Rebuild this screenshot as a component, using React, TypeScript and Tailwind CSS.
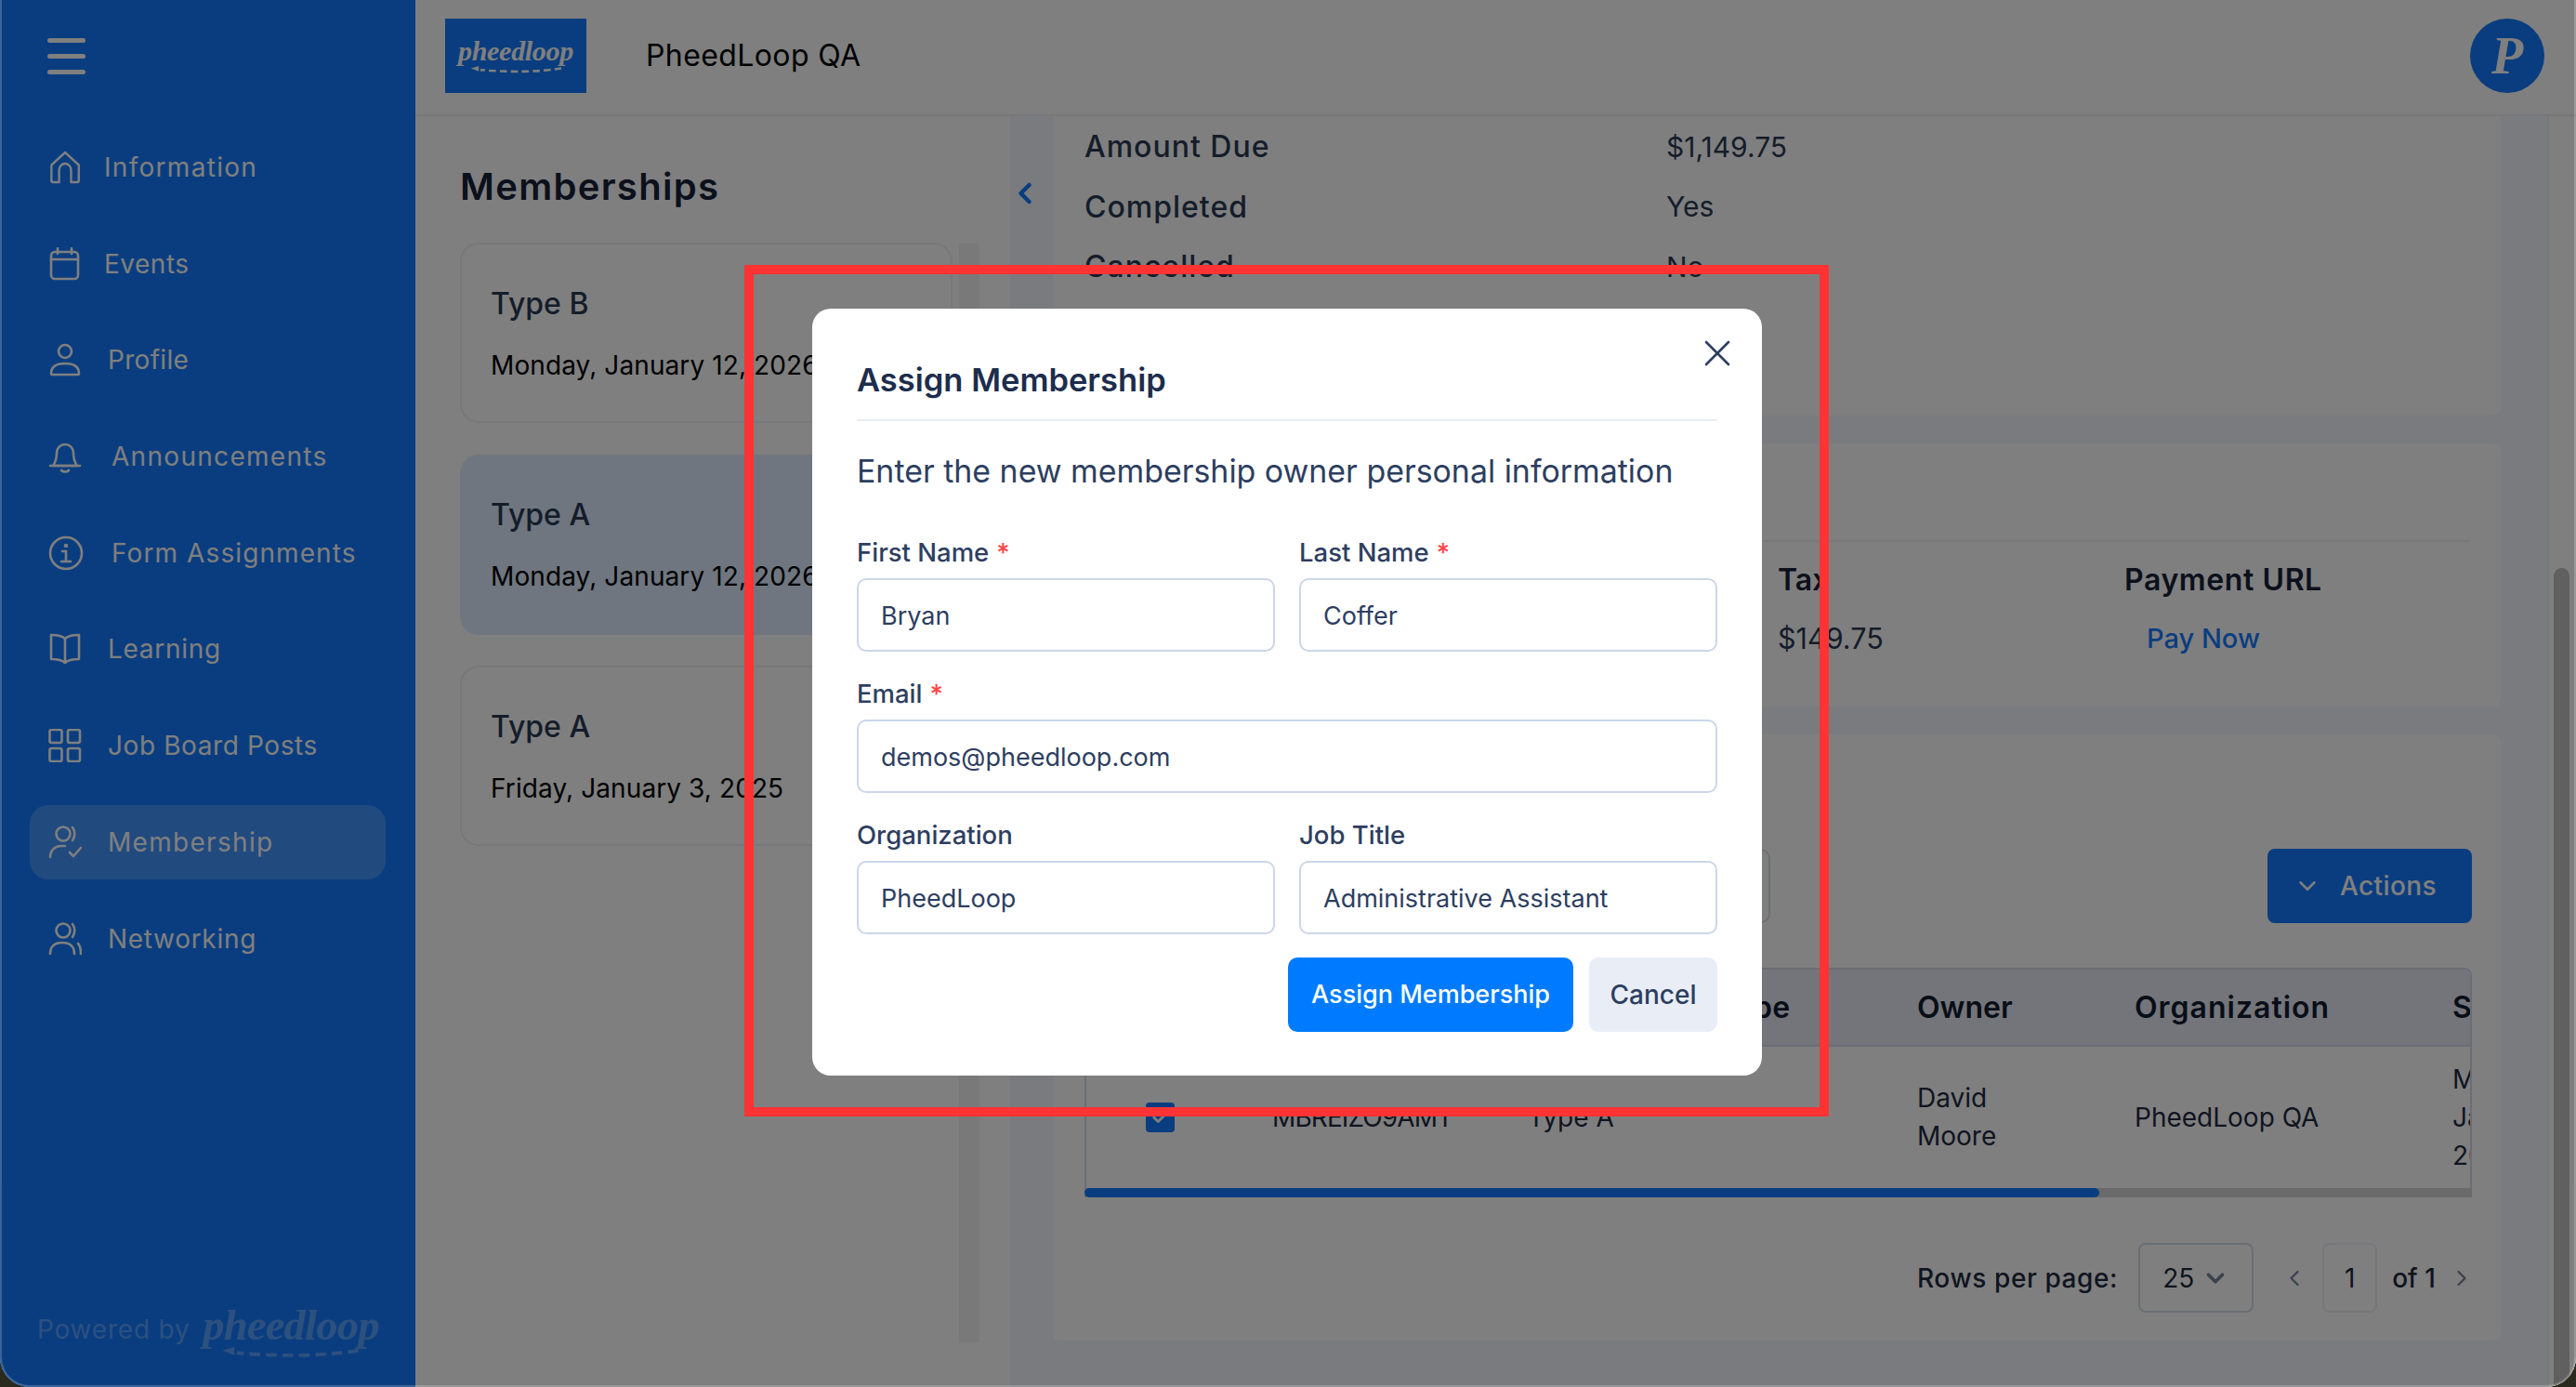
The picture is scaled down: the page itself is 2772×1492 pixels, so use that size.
import React from 'react';
import { ChevronDown, ChevronLeft, ChevronRight, Check, X } from 'lucide-react';

const sans = "font-['Inter','Liberation_Sans',sans-serif]";

type IconProps = { className?: string };

function Glyph({ children, className }: IconProps & { children: React.ReactNode }) {
  return (
    <svg viewBox="0 0 36 36" fill="none" stroke="currentColor" strokeWidth="2.6" strokeLinecap="round" strokeLinejoin="round" className={className ?? 'h-9 w-9 shrink-0'}>
      {children}
    </svg>
  );
}

const HomeIcon = () => (
  <Glyph><path d="M2 15.5 18 2l16 13.5V32a2 2 0 0 1-2 2h-7V21a7 7 0 0 0-14 0v13H4a2 2 0 0 1-2-2z" transform="translate(1.5 0) scale(.92 1)" /></Glyph>
);
const CalendarIcon = () => (
  <Glyph><rect x="3" y="5" width="29" height="29" rx="4" /><path d="M3 13h29M10 1v6M25 1v6" /></Glyph>
);
const UserIcon = () => (
  <Glyph><circle cx="18" cy="9" r="7" /><path d="M3 33c0-8 6-11 15-11s15 3 15 11c0 1-1 1-2 1H5c-1 0-2 0-2-1z" /></Glyph>
);
const BellIcon = () => (
  <Glyph><path d="M5 28c3-4 4-8 4-14a9 9 0 0 1 18 0c0 6 1 10 4 14z" /><path d="M2 28h32M14 33c2 2 6 2 8 0" /></Glyph>
);
const InfoIcon = () => (
  <svg viewBox="0 0 38 38" fill="none" stroke="currentColor" strokeWidth="2.6" strokeLinecap="round" className="h-[38px] w-[38px] shrink-0">
    <circle cx="19" cy="19" r="17" /><path d="M15 17h4v11M14 28h10" /><circle cx="19" cy="11" r="1" />
  </svg>
);
const BookIcon = () => (
  <Glyph><path d="M18 7c-3-3-7-4-15-4v26c8 0 12 1 15 4 3-3 7-4 15-4V3c-8 0-12 1-15 4zM18 7v26" /></Glyph>
);
const GridIcon = () => (
  <Glyph><rect x="1.5" y="1" width="13" height="14" rx="2" /><rect x="21" y="1" width="13" height="14" rx="2" /><rect x="1.5" y="21" width="13" height="14" rx="2" /><rect x="21" y="21" width="13" height="14" rx="2" /></Glyph>
);
const UserCheckIcon = () => (
  <Glyph><circle cx="16" cy="9" r="7.5" /><path d="M26 2c3 4 3 10 0 14M2 34c0-7 5-12 12-12h4M23 29l4 4 8-9" /></Glyph>
);
const UsersIcon = () => (
  <Glyph><circle cx="16" cy="9" r="7.5" /><path d="M26 2c3 4 3 10 0 14M2 34c0-8 5-12 13-12s13 4 13 12M32 23c2 2 3 6 3 11" /></Glyph>
);

const NAV = [
  { label: 'Information', icon: <HomeIcon />, gap: 'ml-[24px] tracking-[1.3px]' },
  { label: 'Events', icon: <CalendarIcon />, gap: 'ml-[24px] tracking-[.5px]' },
  { label: 'Profile', icon: <UserIcon />, gap: 'ml-[28px] tracking-[.3px]' },
  { label: 'Announcements', icon: <BellIcon />, gap: 'ml-[32px] tracking-[1.3px]' },
  { label: 'Form Assignments', icon: <InfoIcon />, gap: 'ml-[30px] tracking-[1.1px]' },
  { label: 'Learning', icon: <BookIcon />, gap: 'ml-[28px] tracking-[.7px]' },
  { label: 'Job Board Posts', icon: <GridIcon />, gap: 'ml-[28px] tracking-[.6px]' },
  { label: 'Membership', icon: <UserCheckIcon />, gap: 'ml-[28px] tracking-[1.3px]', active: true },
  { label: 'Networking', icon: <UsersIcon />, gap: 'ml-[28px] tracking-[.7px]' },
];

function Wordmark({ small }: { small?: boolean }) {
  return (
    <div className={small ? 'flex w-[189px] flex-col items-center opacity-30' : 'flex w-[126px] flex-col items-center'}>
      <span className={small ? "font-['Liberation_Serif',serif] text-[46px] leading-[46px] font-bold tracking-[-.5px] whitespace-nowrap text-white italic" : "font-['Liberation_Serif',serif] text-[30px] leading-[32px] font-bold tracking-[-.3px] whitespace-nowrap text-white italic"}>
        pheedloop
      </span>
      <svg viewBox="0 0 120 10" className="w-[80%]" fill="none" stroke="#fff" strokeWidth="3">
        <path d="M118 3c-30 5-70 5-104 2" strokeDasharray="9 5" />
        <path d="M2 3l10-3v7z" fill="#fff" stroke="none" />
      </svg>
    </div>
  );
}

function MembershipCard({ type, date, selected }: { type: string; date: string; selected?: boolean }) {
  return (
    <div className={selected ? 'h-[194px] rounded-[20px] bg-[#deecfe] px-[33px] pt-[43px]' : 'h-[194px] rounded-[20px] border-2 border-[#f0f0f6] px-[31px] pt-[42px]'}>
      <div className="text-[32px] leading-[44px] font-medium text-[#2b3a55]">{type}</div>
      <div className="mt-[22px] text-[28px] leading-[44px] tracking-[.1px] whitespace-nowrap text-black">{date}</div>
    </div>
  );
}

function Field({ label, value, required }: { label: string; value: string; required?: boolean }) {
  return (
    <label className="flex flex-1 flex-col">
      <span className="h-[48px] text-[27.5px] leading-[40px] font-medium text-[#2d3e60]">
        {label}
        {required ? <span className="ml-[8px] text-[#f44]">*</span> : null}
      </span>
      <input readOnly value={value} className="h-[79px] w-full rounded-[10px] border-2 border-[#cbd6e8] bg-white px-[24px] pt-[2px] text-[27px] text-[#2d3e60] outline-none" />
    </label>
  );
}

export default function App() {
  return (
    <div className={`${sans} h-[1492px] w-[2772px] overflow-hidden bg-[#2a2a1e]`}>
      <div className="relative flex h-full w-full overflow-hidden rounded-b-[32px] bg-white">
        <aside className="flex h-full w-[447px] shrink-0 flex-col bg-[#147bff] text-white">
          <div className="ml-[51px] flex h-[140px] flex-col gap-[12px] pt-[41px]">
            <span className="h-[5px] w-[41px] rounded-full bg-white" />
            <span className="h-[5px] w-[41px] rounded-full bg-white" />
            <span className="h-[5px] w-[41px] rounded-full bg-white" />
          </div>
          <nav className="ml-[32px] flex w-[383px] flex-col gap-[23.7px]">
            {NAV.map((item) => (
              <div key={item.label} className={item.active ? 'flex h-[80px] items-center rounded-[20px] bg-white/20 pl-[20px]' : 'flex h-[80px] items-center pl-[20px]'}>
                {item.icon}
                <span className={`${item.gap} text-[28px] whitespace-nowrap`}>{item.label}</span>
              </div>
            ))}
          </nav>
          <div className="mt-auto mb-[30px] ml-[40px] flex items-center gap-[14px]">
            <span className="mb-[6px] text-[28px] tracking-[.8px] whitespace-nowrap text-white/30">Powered by</span>
            <Wordmark small />
          </div>
        </aside>

        <div className="flex min-w-0 flex-1 flex-col">
          <header className="flex h-[125px] shrink-0 items-center border-b-2 border-[#f0f0f4] pr-[34px] pb-[3px] pl-[32px]">
            <div className="flex h-[80px] w-[152px] items-center justify-center bg-[#147bff] pb-[2px]">
              <Wordmark />
            </div>
            <span className="ml-[64px] text-[32px] tracking-[.4px] text-black">PheedLoop QA</span>
            <div className="ml-auto flex h-[80px] w-[80px] items-center justify-center rounded-full bg-[#147bff] font-['Liberation_Serif',serif] text-[56px] font-bold text-white italic">
              P
            </div>
          </header>

          <div className="flex min-h-0 flex-1">
            <section className="flex w-[640px] shrink-0">
              <div className="ml-[48px] w-[530px] shrink-0">
                <h2 className="mt-[46px] mb-[30px] text-[40px] leading-[60px] font-semibold tracking-[1.3px] text-[#172238]">Memberships</h2>
                <div className="flex flex-col gap-[33.5px]">
                  <MembershipCard type="Type B" date="Monday, January 12, 2026" />
                  <MembershipCard type="Type A" date="Monday, January 12, 2026" selected />
                  <MembershipCard type="Type A" date="Friday, January 3, 2025" />
                </div>
              </div>
              <div className="mt-[137px] ml-[7px] h-[1182px] w-[22px] bg-[#f2f2f2]" />
            </section>

            <main className="flex min-w-0 flex-1 bg-[#f4f6fc]">
              <div className="w-[46px] shrink-0 pt-[65px]">
                <ChevronLeft className="-ml-[2px] text-[#147bff]" size={36} strokeWidth={3} />
              </div>
              <div className="flex w-[1558px] shrink-0 flex-col gap-[30px] text-[#2b3a55]">
                <div className="h-[322px] rounded-b-[8px] bg-white pt-px pl-[34px]">
                  {[['Amount Due', '$1,149.75'], ['Completed', 'Yes'], ['Cancelled', 'No']].map(([k, v]) => (
                    <div key={k} className="flex h-[64.5px] items-center">
                      <span className="w-[626px] text-[32px] font-medium tracking-[1px]">{k}</span>
                      <span className="text-[30px]">{v}</span>
                    </div>
                  ))}
                </div>

                <div className="h-[283px] rounded-[8px] bg-white px-[34px]">
                  <div className="h-[106px] border-b-2 border-[#f0f0f4]" />
                  <div className="flex pt-[17px] pl-[746px]">
                    <div className="w-[373px]">
                      <div className="h-[48px] text-[32px] leading-[48px] font-semibold text-[#172238]">Tax</div>
                      <div className="mt-[15px] text-[30.5px] leading-[48px]">$149.75</div>
                    </div>
                    <div>
                      <div className="h-[48px] text-[32px] leading-[48px] font-semibold tracking-[.6px] text-[#172238]">Payment URL</div>
                      <div className="mt-[15px] ml-[24px] text-[29px] leading-[48px] font-medium text-[#147bff]">Pay Now</div>
                    </div>
                  </div>
                </div>

                <div className="h-[652px] rounded-[8px] bg-white pt-[123px] pr-[31px] pl-[34px]">
                  <div className="flex h-[80px] justify-between">
                    <div className="h-[80px] w-[738px] rounded-[10px] border-2 border-[#d8dde8]" />
                    <button className="flex h-[80px] w-[220px] items-center gap-[20px] rounded-[8px] bg-[#147bff] pl-[28px] text-[28px] font-medium tracking-[.4px] text-white">
                      <ChevronDown size={30} strokeWidth={2} />
                      Actions
                    </button>
                  </div>

                  <div className="mt-[48px] h-[237px] overflow-hidden rounded-t-[8px] border-x-2 border-t-2 border-[#d5dbe8]">
                    <div className="flex h-[83px] items-center border-b-2 border-[#d5dbe8] bg-[#e9ebf5] text-[32px] font-semibold whitespace-nowrap text-[#111c30]">
                      <div className="w-[475px] shrink-0 pl-[200px]">ID</div>
                      <div className="w-[419px] shrink-0 tracking-[.2px]">Membership Type</div>
                      <div className="w-[234px] shrink-0">Owner</div>
                      <div className="w-[342px] shrink-0 tracking-[1px]">Organization</div>
                      <div className="w-[200px] shrink-0">Start Date</div>
                    </div>
                    <div className="flex h-[152px] items-center text-[28px] text-[#1f2a40]">
                      <div className="w-[200px] shrink-0 pl-[64px]">
                        <div className="flex h-[32px] w-[31px] items-center justify-center rounded-[4px] bg-[#147bff] text-white">
                          <Check size={22} strokeWidth={3} />
                        </div>
                      </div>
                      <div className="w-[275px] shrink-0 tracking-[-.9px]">MBREIZO9AMT</div>
                      <div className="w-[419px] shrink-0">Type A</div>
                      <div className="w-[234px] shrink-0 leading-[41px]">David<br />Moore</div>
                      <div className="w-[342px] shrink-0">PheedLoop QA</div>
                      <div className="w-[200px] shrink-0 leading-[41px]">Monday,<br />January 12,<br />2026</div>
                    </div>
                  </div>
                  <div className="h-[10px] bg-[#d5d5d5]">
                    <div className="h-full w-[1092px] rounded-full bg-[#147bff]" />
                  </div>

                  <div className="mt-[49px] flex h-[75px] items-center text-[28px] whitespace-nowrap text-[#1f2a40]">
                    <span className="ml-[896px] shrink-0 font-medium tracking-[.6px]">Rows per page:</span>
                    <div className="ml-[22px] flex h-[75px] w-[124px] shrink-0 items-center gap-[8px] rounded-[8px] border-2 border-[#d5dbe8] pl-[24px]">
                      25 <ChevronDown size={30} strokeWidth={3} className="text-[#7a859a]" />
                    </div>
                    <ChevronLeft size={28} strokeWidth={2} className="ml-[30px] shrink-0 text-[#7a859a]" />
                    <div className="ml-[16px] flex h-[75px] w-[59px] shrink-0 items-center justify-center rounded-[8px] border-2 border-[#eceef4]">1</div>
                    <span className="ml-[16px] shrink-0 font-medium">of 1</span>
                    <ChevronRight size={28} strokeWidth={2} className="ml-[14px] shrink-0 text-[#7a859a]" />
                  </div>
                </div>
              </div>
              <div className="w-[50px] shrink-0" />
              <div className="flex w-[31px] shrink-0 flex-col border-l-2 border-[#f0f0f0] bg-white">
                <div className="mt-[486px] ml-[5px] w-[17px] flex-1 rounded-t-full bg-[#c1c1c1]" />
              </div>
            </main>
          </div>
        </div>

        <div className="absolute inset-0 bg-black/50" />
        <div className="pointer-events-none absolute inset-0 rounded-b-[32px] border-x-2 border-b-2 border-white/20" />

        <div className="absolute top-[332px] left-[874px] h-[825px] w-[1022px] rounded-[20px] bg-white px-[48px]">
          <button className="absolute top-[24px] right-[24px] text-[#2d3e60]">
            <X size={48} strokeWidth={1.3} />
          </button>
          <h3 className="flex h-[121px] items-end border-b-2 border-[#e9edf6] pb-[20px] text-[34.5px] leading-[44px] font-semibold text-[#1d2d4c]">Assign Membership</h3>
          <p className="mt-[30px] text-[33.9px] leading-[48px] whitespace-nowrap text-[#2d3e60]">Enter the new membership owner personal information</p>
          <div className="mt-[43px] flex gap-[26px]">
            <Field label="First Name" value="Bryan" required />
            <Field label="Last Name" value="Coffer" required />
          </div>
          <div className="mt-[25px]">
            <Field label="Email" value="demos@pheedloop.com" required />
          </div>
          <div className="mt-[25px] flex gap-[26px]">
            <Field label="Organization" value="PheedLoop" />
            <Field label="Job Title" value="Administrative Assistant" />
          </div>
          <div className="mt-[25px] flex justify-end gap-[17px]">
            <button className="h-[80px] w-[307px] rounded-[10px] bg-[#007bff] text-[27px] font-medium text-white">Assign Membership</button>
            <button className="h-[80px] w-[138px] rounded-[10px] bg-[#e9edf6] text-[28px] font-medium text-[#2d3e60]">Cancel</button>
          </div>
        </div>

        <div className="pointer-events-none absolute top-[285px] left-[801px] h-[916px] w-[1167px] border-[10px] border-[#ff3333]" />
      </div>
    </div>
  );
}
